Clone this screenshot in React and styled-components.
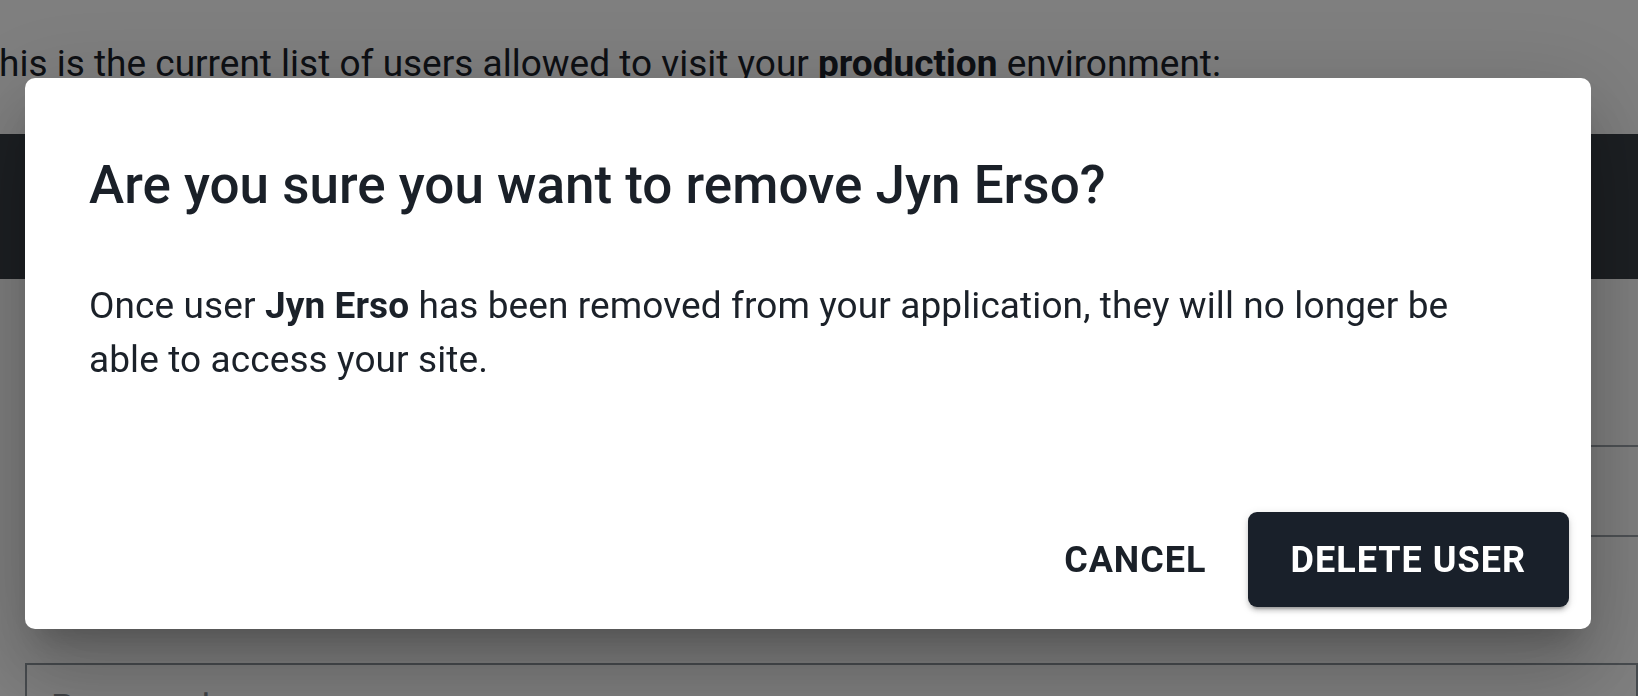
import React from 'react';
import styled, { createGlobalStyle } from 'styled-components';

const GlobalStyle = createGlobalStyle`
    html, body {
        margin: 0;
        padding: 0;
    }
    body {
        font-family: Roboto, "Liberation Sans", Arial, sans-serif;
        color: #1b2129;
        background: #ffffff;
        overflow: hidden;
    }
`

const Page = styled.div`
    width: 1638px;
    height: 696px;
    overflow: hidden;
    background: #ffffff;
`

const Intro = styled.p`
    margin: 0 0 0 -23px;
    padding: 40px 0 0;
    font-size: 37px;
    line-height: 48px;
    white-space: nowrap;
    color: #1b2129;
`

const HeaderBand = styled.div`
    margin-top: 46px;
    height: 145px;
    background: #393f46;
`

const Content = styled.div`
    margin-left: 25px;
`

const Row = styled.div`
    height: ${props => props.height}px;
    border-bottom: 2px solid #9ba2a9;
    box-sizing: border-box;
`

const Field = styled.div`
    margin-top: 126px;
    border: 2px solid #8f979e;
    height: 80px;
    padding: 22px 24px 0;
    font-size: 36px;
    color: #80868c;
`

const Backdrop = styled.div`
    position: fixed;
    inset: 0;
    background: rgba(0, 0, 0, 0.5);
    display: flex;
    align-items: flex-start;
    padding: 78px 0 0 25px;
`

const Dialog = styled.div`
    width: 1566px;
    height: 551px;
    box-sizing: border-box;
    background: #ffffff;
    border-radius: 10px;
    display: flex;
    flex-direction: column;
    padding-top: 76px;
    box-shadow: 0 22px 30px -14px rgba(0, 0, 0, 0.2),
        0 48px 76px 6px rgba(0, 0, 0, 0.14),
        0 18px 92px 16px rgba(0, 0, 0, 0.12);
`

const Title = styled.h2`
    margin: 0;
    padding: 0 64px;
    font-size: 53px;
    font-weight: 500;
    line-height: 1.2;
    color: #1a2028;
`

const Body = styled.p`
    margin: 61px 0 0;
    padding: 0 120px 0 64px;
    font-size: 37px;
    line-height: 54px;
    letter-spacing: 0.1px;
    color: #1b2129;

    strong {
        font-weight: 700;
    }
`

const Actions = styled.div`
    margin-top: auto;
    display: flex;
    justify-content: flex-end;
    align-items: center;
    gap: 19px;
    padding: 0 22px 22px;
`

const Button = styled.button`
    height: 95px;
    padding: 0 ${props => props.primary ? 43 : 22}px;
    border: none;
    border-radius: 9px;
    font-family: Roboto, "Liberation Sans", Arial, sans-serif;
    font-size: 36px;
    font-weight: 700;
    letter-spacing: 1px;
    text-transform: uppercase;
    cursor: pointer;
    color: ${props => props.primary ? '#ffffff' : '#1a2028'};
    background: ${props => props.primary ? '#19202a' : 'transparent'};
    box-shadow: ${props => props.primary
        ? '0 6px 2px -4px rgba(0,0,0,0.2), 0 4px 4px 0 rgba(0,0,0,0.14), 0 2px 10px 0 rgba(0,0,0,0.12)'
        : 'none'};
`

export default function App() {
    return (
        <>
            <GlobalStyle />
            <Page>
                <Intro>
                    This is the current list of users allowed to visit your <strong>production</strong> environment:
                </Intro>
                <HeaderBand />
                <Content>
                    <Row height={168} />
                    <Row height={90} />
                    <Field>Password</Field>
                </Content>
            </Page>
            <Backdrop>
                <Dialog role="dialog">
                    <Title>Are you sure you want to remove Jyn Erso?</Title>
                    <Body>
                        Once user <strong>Jyn Erso</strong> has been removed from your application, they will no longer be able to access your site.
                    </Body>
                    <Actions>
                        <Button>Cancel</Button>
                        <Button primary>Delete User</Button>
                    </Actions>
                </Dialog>
            </Backdrop>
        </>
    );
}
